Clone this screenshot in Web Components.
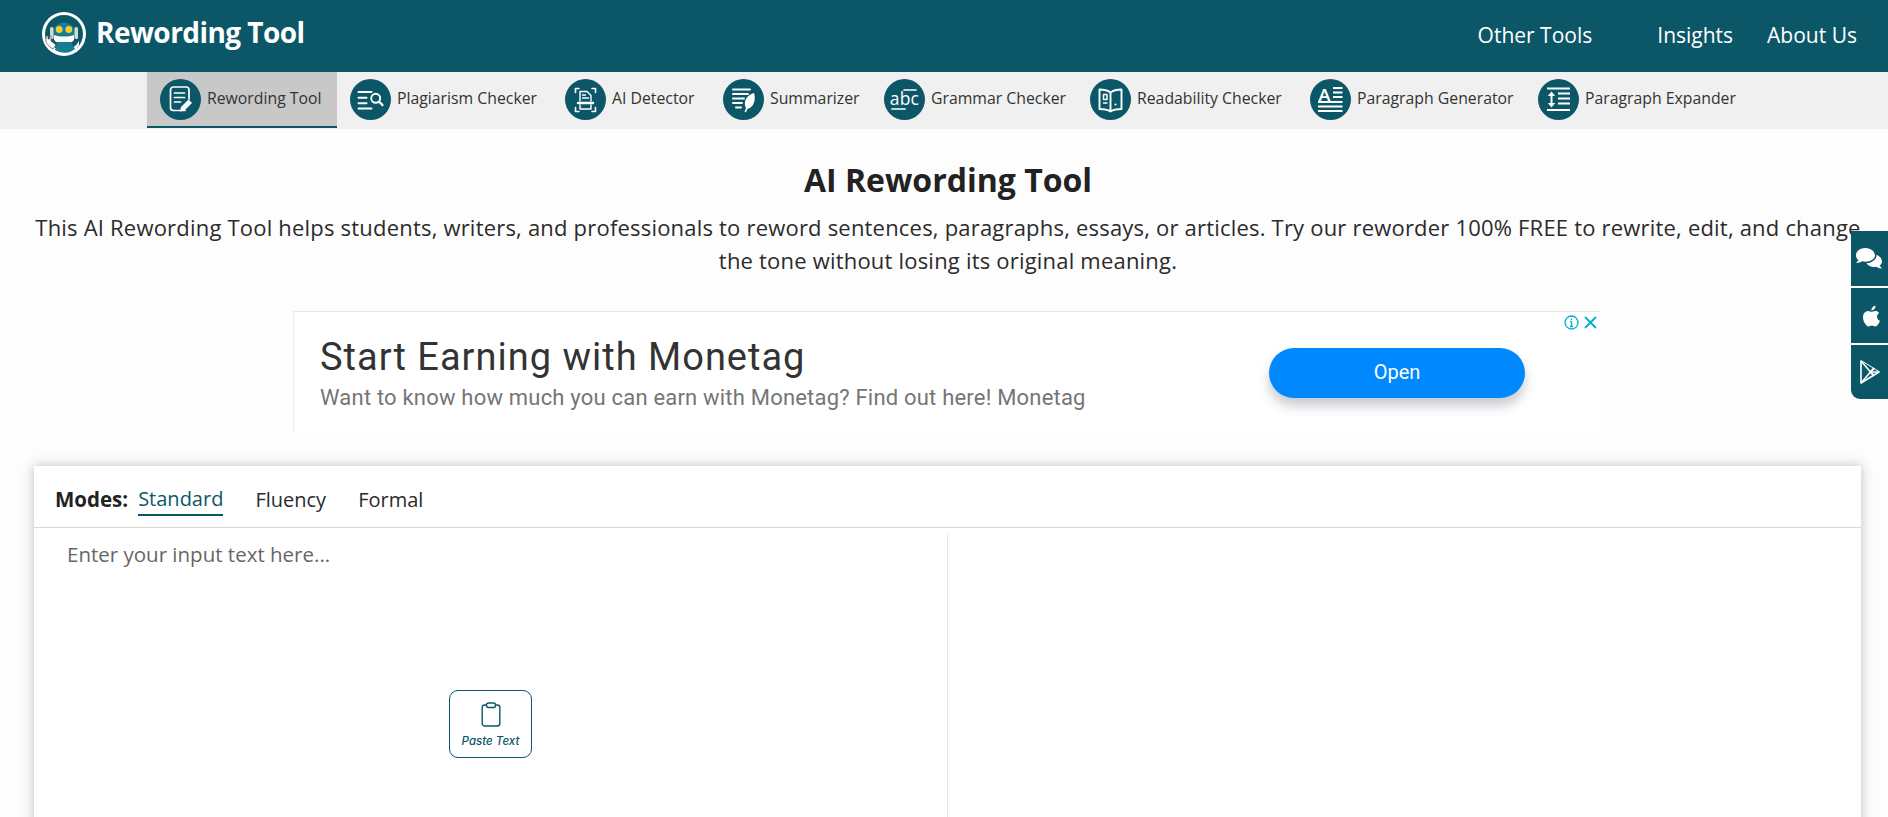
<!DOCTYPE html>
<html lang="en">
<head>
<meta charset="utf-8">
<title>Rewording Tool</title>
<style>
  html, body { margin: 0; height: 100%; overflow: hidden; background: #fdfdfd; }
  body { font-family: "Open Sans", "Noto Sans", sans-serif; color: #2b2b2b; }
  svg { display: block; }
</style>
</head>
<body>
<app-header title="Rewording Tool">
  <a>Other Tools</a>
  <a>Insights</a>
  <a>About Us</a>
</app-header>

<tool-nav>
  <tool-tab active w="190">
    <svg slot="icon" viewBox="0 0 41 41" fill="none" stroke="#fff" stroke-width="1.7" stroke-linecap="round" stroke-linejoin="round"><path d="M25 31.500H13.500a3 3 0 0 1-3-3V11a3 3 0 0 1 3-3h12.500a3 3 0 0 1 3 3v9"/><path d="M14.500 14h10M14.500 18.500h10M14.500 23h6"/><path d="M20 32.500l1-4.500 7.500-7.500 3.500 3.500-7.500 7.500z" fill="#fff" stroke="none"/></svg>
    Rewording Tool
  </tool-tab>
  <tool-tab w="215">
    <svg slot="icon" viewBox="0 0 41 41" fill="none" stroke="#fff" stroke-width="2" stroke-linecap="round"><path d="M8.500 13h13M8.500 18.700h8M8.500 24.300h8M8.500 29.500h13"/><circle cx="25.700" cy="19.300" r="4.500" stroke-width="1.900"/><path d="M29.200 22.800l3.300 3.300" stroke-width="2.200"/></svg>
    Plagiarism Checker
  </tool-tab>
  <tool-tab w="158">
    <svg slot="icon" viewBox="0 0 41 41" fill="none" stroke="#fff" stroke-width="1.400" stroke-linecap="round" stroke-linejoin="round"><path d="M14 9.500H10.500v4M27 9.500h3.500v4M14 32.500h-3.500v-4M27 32.500h3.500v-4" stroke-width="1.600"/><path d="M15 22v-9.500h7l4 4V22M15 26v4h11v-4"/><path d="M17.500 16h3M17.500 19h6"/><path d="M13 24h15" stroke-width="2.400"/></svg>
    AI Detector
  </tool-tab>
  <tool-tab w="161">
    <svg slot="icon" viewBox="0 0 41 41" fill="none" stroke="#fff" stroke-width="2" stroke-linecap="round"><path d="M10 10.500h17M10 15h15M10 19.500h11M10 24h9M13 28.500h5"/><path d="M31 14c-4 1-8 4-9 9-.4 2.500 0 4.500 1 6l-1.500 4 1.500.300 1.500-3.500c4-.5 6-4 7-8 .4-2 .5-5.500-.5-7.800z" fill="#fff" stroke="none"/></svg>
    Summarizer
  </tool-tab>
  <tool-tab w="206">
    <svg slot="icon" viewBox="0 0 41 41" fill="none" stroke="#fff" stroke-linecap="round"><path d="M20 11h12M8 30h13" stroke-width="1.700"/><text x="20.500" y="25.500" text-anchor="middle" font-family="'Open Sans', sans-serif" font-size="17.500" letter-spacing=".2" fill="#fff" stroke="none">abc</text></svg>
    Grammar Checker
  </tool-tab>
  <tool-tab w="220">
    <svg slot="icon" viewBox="0 0 41 41" fill="none" stroke="#fff" stroke-width="1.900" stroke-linejoin="round" stroke-linecap="round"><path d="M20.500 13.500c-3-2.300-6.500-3-11-3V30c4.500 0 8 .5 11 2.500 3-2 6.500-2.500 11-2.500V10.500c-4.500 0-8 .7-11 3zM20.500 13.500v19"/><path d="M13.500 15.500h3.500v5h-3.500zM13.500 24h3.500" stroke-width="1.500"/><circle cx="25.500" cy="25.500" r="1.100" fill="#fff" stroke="none"/></svg>
    Readability Checker
  </tool-tab>
  <tool-tab w="228">
    <svg slot="icon" viewBox="0 0 41 41" fill="none" stroke="#fff" stroke-width="2"><text x="8.500" y="21.500" font-family="Lato, 'Open Sans', sans-serif" font-weight="700" font-size="17" fill="#fff" stroke="none">A</text><path d="M23 9h9.500M23 13.500h9.500M23 18h9.500M8 23h24.500M8 27.500h24.500M8 32h24.500"/></svg>
    Paragraph Generator
  </tool-tab>
  <tool-tab w="211">
    <svg slot="icon" viewBox="0 0 41 41" fill="none" stroke="#fff" stroke-width="2"><path d="M9 9.500h23M20 14.500h12M20 19.500h12M20 24.500h12M9 31h23"/><path d="M13.500 15v11" stroke-width="2"/><path d="M9.800 17l3.700-4.500 3.700 4.500zM9.800 24l3.700 4.500 3.700-4.500z" fill="#fff" stroke="none"/></svg>
    Paragraph Expander
  </tool-tab>
</tool-nav>

<intro-block heading="AI Rewording Tool">This AI Rewording Tool helps students, writers, and professionals to reword sentences, paragraphs, essays, or articles. Try our reworder 100% FREE to rewrite, edit, and change the tone without losing its original meaning.</intro-block>

<ad-banner heading="Start Earning with Monetag" action="Open">Want to know how much you can earn with Monetag? Find out here! Monetag</ad-banner>

<rewrite-card placeholder="Enter your input text here...">
  <mode-tab active>Standard</mode-tab>
  <mode-tab>Fluency</mode-tab>
  <mode-tab>Formal</mode-tab>
</rewrite-card>

<side-rail></side-rail>

<script>
const TEAL = '#0b5768';

class AppHeader extends HTMLElement {
  constructor() {
    super();
    this.attachShadow({ mode: 'open' }).innerHTML = `
      <style>
        :host { display: flex; align-items: center; height: 72px; background: ${TEAL}; color: #fff; padding: 0 31px 0 41px; }
        svg { width: 46px; height: 46px; display: block; margin: -4px 9px 0 0; }
        .brand { font: 700 28px/1 "Open Sans", sans-serif; letter-spacing: -.55px; margin-top: -8px; }
        nav { margin-left: auto; display: flex; font: 400 21px/1 "Open Sans", sans-serif; margin-top: -2px; }
        ::slotted(a) { margin-left: 34px; }
        ::slotted(a:first-child) { margin-right: 31px; }
      </style>
      <svg viewBox="0 0 46 46">
        <circle cx="23" cy="23" r="22" fill="#fff"/>
        <circle cx="23" cy="23" r="19" fill="${TEAL}"/>
        <path d="M8 30a17 17 0 0 0 30 0V34a17 17 0 0 1-30 0z" fill="#fff"/>
        <path d="M12 22a11 10.500 0 0 1 22 0v6H12z" fill="#177d92"/>
        <rect x="9" y="16" width="3.500" height="12" rx="1.500" fill="#d7d7d7"/>
        <rect x="33.500" y="16" width="3.500" height="12" rx="1.500" fill="#d7d7d7"/>
        <circle cx="18.200" cy="18.500" r="3.400" fill="#f4cf2c"/>
        <circle cx="27.800" cy="18.500" r="3.400" fill="#f4cf2c"/>
        <path d="M13 24c5 2 15 2 20 0v5l-2 2H15l-2-2z" fill="#fff"/>
        <path d="M16 31h14l4 7a17 17 0 0 1-20 1z" fill="#177d92"/>
        <path d="M5 25v5c0 3 4 6 7 8l3-4-5-4v-5H8.500v3H7v-3z" fill="#fff" stroke="#555" stroke-width=".7"/>
      </svg>
      <div class="brand"></div>
      <nav><slot></slot></nav>`;
    this.shadowRoot.querySelector('.brand').textContent = this.getAttribute('title');
  }
}

class ToolNav extends HTMLElement {
  constructor() {
    super();
    this.attachShadow({ mode: 'open' }).innerHTML = `
      <style>
        :host { display: flex; height: 57px; background: #f0f0f0; padding-left: 147px; }
      </style>
      <slot></slot>`;
  }
}

class ToolTab extends HTMLElement {
  constructor() {
    super();
    this.attachShadow({ mode: 'open' }).innerHTML = `
      <style>
        :host { display: flex; align-items: center; box-sizing: border-box; height: 56px; padding: 0 0 2px 13px; gap: 6px; font: 400 15.800px/1 "Open Sans", sans-serif; color: #333; white-space: nowrap; flex: none; }
        :host([active]) { background: #c8c8c8; border-bottom: 2px solid ${TEAL}; padding-bottom: 0; }
        .ico { width: 41px; height: 41px; border-radius: 50%; background: ${TEAL}; flex: none; }
        ::slotted(svg) { width: 41px; height: 41px; display: block; }
      </style>
      <div class="ico"><slot name="icon"></slot></div>
      <slot></slot>`;
    this.style.width = this.getAttribute('w') + 'px';
  }
}

class IntroBlock extends HTMLElement {
  constructor() {
    super();
    this.attachShadow({ mode: 'open' }).innerHTML = `
      <style>
        :host { display: block; text-align: center; padding: 30px 24px 0 32px; color: #2b2b2b; }
        h1 { margin: 0 0 10px; font: 700 32px/42px "Open Sans", sans-serif; color: #222; }
        p { margin: 0 auto; font: 400 22px/33px "Open Sans", sans-serif; letter-spacing: .2px; }
      </style>
      <h1></h1>
      <p><slot></slot></p>`;
    this.shadowRoot.querySelector('h1').textContent = this.getAttribute('heading');
  }
}

class AdBanner extends HTMLElement {
  constructor() {
    super();
    this.attachShadow({ mode: 'open' }).innerHTML = `
      <style>
        :host { display: flex; position: relative; box-sizing: border-box; width: 1307px; height: 122px; margin: 34px 0 0 293px; background: #fff; border-top: 1px solid #e6e6e6; border-left: 1px solid #eee; padding: 0 75px 0 26px; align-items: center; justify-content: space-between; }
        .copy { margin-top: 1px; }
        h2 { margin: 0 0 4px; font: 400 38px/46px Roboto, sans-serif; color: #333; letter-spacing: 1px; }
        p { margin: 0; font: 400 22px/28px Roboto, sans-serif; color: #757575; letter-spacing: .2px; }
        button { width: 256px; height: 50px; margin-top: 0; border: 0; border-radius: 25px; background: #0088ff; color: #fff; font: 400 20px Roboto, sans-serif; padding-bottom: 2px; box-shadow: 0 8px 12px rgba(60, 70, 90, .28); }
        .close { position: absolute; top: 2px; right: 2px; display: flex; align-items: center; gap: 3px; }
      </style>
      <div class="copy"><h2></h2><p><slot></slot></p></div>
      <button></button>
      <div class="close">
        <svg width="17" height="17" viewBox="0 0 17 17" fill="none" stroke="#00aecd" stroke-width="1.300"><circle cx="8.500" cy="8.500" r="6.500"/><path d="M8.500 7.500v5M8.500 4.500v1.500M7 7.500h1.500M7 12.500h3"/></svg>
        <svg width="15" height="15" viewBox="0 0 15 15" fill="none" stroke="#00aecd" stroke-width="1.800"><path d="M2 2l11 11M13 2L2 13"/></svg>
      </div>`;
    this.shadowRoot.querySelector('h2').textContent = this.getAttribute('heading');
    this.shadowRoot.querySelector('button').textContent = this.getAttribute('action');
  }
}

class ModeTab extends HTMLElement {
  constructor() {
    super();
    this.attachShadow({ mode: 'open' }).innerHTML = `
      <style>
        :host { display: block; height: 34px; box-sizing: border-box; font: 400 20px/35px "Open Sans", sans-serif; color: #2b2b2b; margin-right: 32px; flex: none; }
        :host([active]) { color: ${TEAL}; border-bottom: 2px solid ${TEAL}; line-height: 33px; }
      </style>
      <slot></slot>`;
  }
}

class PasteButton extends HTMLElement {
  constructor() {
    super();
    this.attachShadow({ mode: 'open' }).innerHTML = `
      <style>
        :host { display: flex; flex-direction: column; align-items: center; box-sizing: border-box; width: 83px; height: 68px; padding-top: 11px; gap: 7px; border: 1.500px solid ${TEAL}; border-radius: 9px; background: #fff; color: ${TEAL}; font: italic 500 11.500px/14px Inter, sans-serif; }
        svg { display: block; }
      </style>
      <svg width="20" height="25" viewBox="0 0 20 25" fill="none" stroke="${TEAL}" stroke-width="1.400" stroke-linejoin="round"><rect x="1.200" y="3" width="17.600" height="21" rx="2.500"/><rect x="5.500" y="1" width="9" height="4.500" rx="2" fill="#fff"/></svg>
      <span>Paste Text</span>`;
  }
}
customElements.define('paste-button', PasteButton);

class RewriteCard extends HTMLElement {
  constructor() {
    super();
    this.attachShadow({ mode: 'open' }).innerHTML = `
      <style>
        :host { display: block; box-sizing: border-box; width: 1827px; height: 500px; margin: 33px 0 0 34px; background: #fff; box-shadow: 0 0 12px rgba(0, 0, 0, .25); }
        .modes { display: flex; align-items: flex-start; height: 62px; box-sizing: border-box; padding: 16px 0 0 21px; border-bottom: 1px solid #d8d8d8; }
        b { font: 700 20.500px/33px "Open Sans", sans-serif; color: #222; margin-right: 10px; margin-top: 1px; }
        .panes { display: grid; grid-template-columns: 914px 1fr; margin-top: 5px; }
        .left { height: 430px; border-right: 1px solid #e8e8e8; display: flex; flex-direction: column; }
        .hint { font: 400 20.500px/28px "Open Sans", sans-serif; color: #666; padding: 7px 0 0 33px; }
        paste-button { margin: 122px 0 0 415px; }
      </style>
      <div class="modes"><b>Modes:</b><slot></slot></div>
      <div class="panes">
        <div class="left">
          <div class="hint"></div>
          <paste-button></paste-button>
        </div>
        <div></div>
      </div>`;
    this.shadowRoot.querySelector('.hint').textContent = this.getAttribute('placeholder');
  }
}

class SideRail extends HTMLElement {
  constructor() {
    super();
    this.attachShadow({ mode: 'open' }).innerHTML = `
      <style>
        :host { position: fixed; top: 231px; right: 0; width: 37px; display: flex; flex-direction: column; gap: 2px; }
        div { height: 55px; background: ${TEAL}; display: flex; align-items: center; justify-content: center; }
        div:first-child { height: 54px; border-top-left-radius: 9px; }
        div:last-child { height: 54px; border-bottom-left-radius: 9px; }
      </style>
      <div>
        <svg width="29" height="24" viewBox="0 0 29 24" fill="#fff"><path d="M10.500 1C5 1 1 4.200 1 8.300c0 2 .900 3.700 2.500 5L1 16c2.500 0 4.500-.7 6-1.700 1 .3 2.200.4 3.500.4 5.500 0 9.500-3 9.500-6.400S16 1 10.500 1z"/><path d="M21.500 7.800c.4 4.600-4.500 8.400-10 8.300 1.300 2.500 4.300 4 7.500 4 1 0 1.800-.1 2.500-.3 1.300 1 3 1.600 5.500 1.700l-2.300-2.800c1.400-1.100 2.300-2.600 2.300-4.200 0-2.900-2.300-5.400-5.500-6.700z"/></svg>
      </div>
      <div>
        <svg width="22" height="26" viewBox="0 0 22 26" fill="#fff"><path d="M18 13.800c0-2.600 2.100-3.800 2.200-3.900-1.200-1.800-3.100-2-3.700-2-1.600-.2-3.100.9-3.900.9s-2.100-.9-3.400-.9C7.400 8 5.800 8.900 4.900 10.400c-1.800 3.200-.5 7.800 1.300 10.400.9 1.300 1.900 2.700 3.300 2.600 1.300 0 1.800-.8 3.400-.8s2 .8 3.400.8 2.300-1.300 3.200-2.600c1-1.500 1.400-2.900 1.400-3-.1 0-2.800-1-2.900-4zM15.400 6c.7-.9 1.200-2.100 1.100-3.300-1 0-2.300.7-3 1.500-.7.800-1.200 2-1.100 3.200 1.200.1 2.300-.5 3-1.400z"/></svg>
      </div>
      <div>
        <svg width="22" height="26" viewBox="0 0 22 26" fill="none" stroke="#fff" stroke-width="1.600" stroke-linejoin="round"><path d="M2 2l18 11L2 24z"/><path d="M2 24l9.500-11" /><path d="M2 2l9.500 11L20 13" fill="#0b5768"/><path d="M11.500 13L15 9.300M11.500 13L15 16.700" stroke-width="2"/></svg>
      </div>`;
  }
}

customElements.define('app-header', AppHeader);
customElements.define('tool-nav', ToolNav);
customElements.define('tool-tab', ToolTab);
customElements.define('intro-block', IntroBlock);
customElements.define('ad-banner', AdBanner);
customElements.define('mode-tab', ModeTab);
customElements.define('rewrite-card', RewriteCard);
customElements.define('side-rail', SideRail);
</script>
</body>
</html>
